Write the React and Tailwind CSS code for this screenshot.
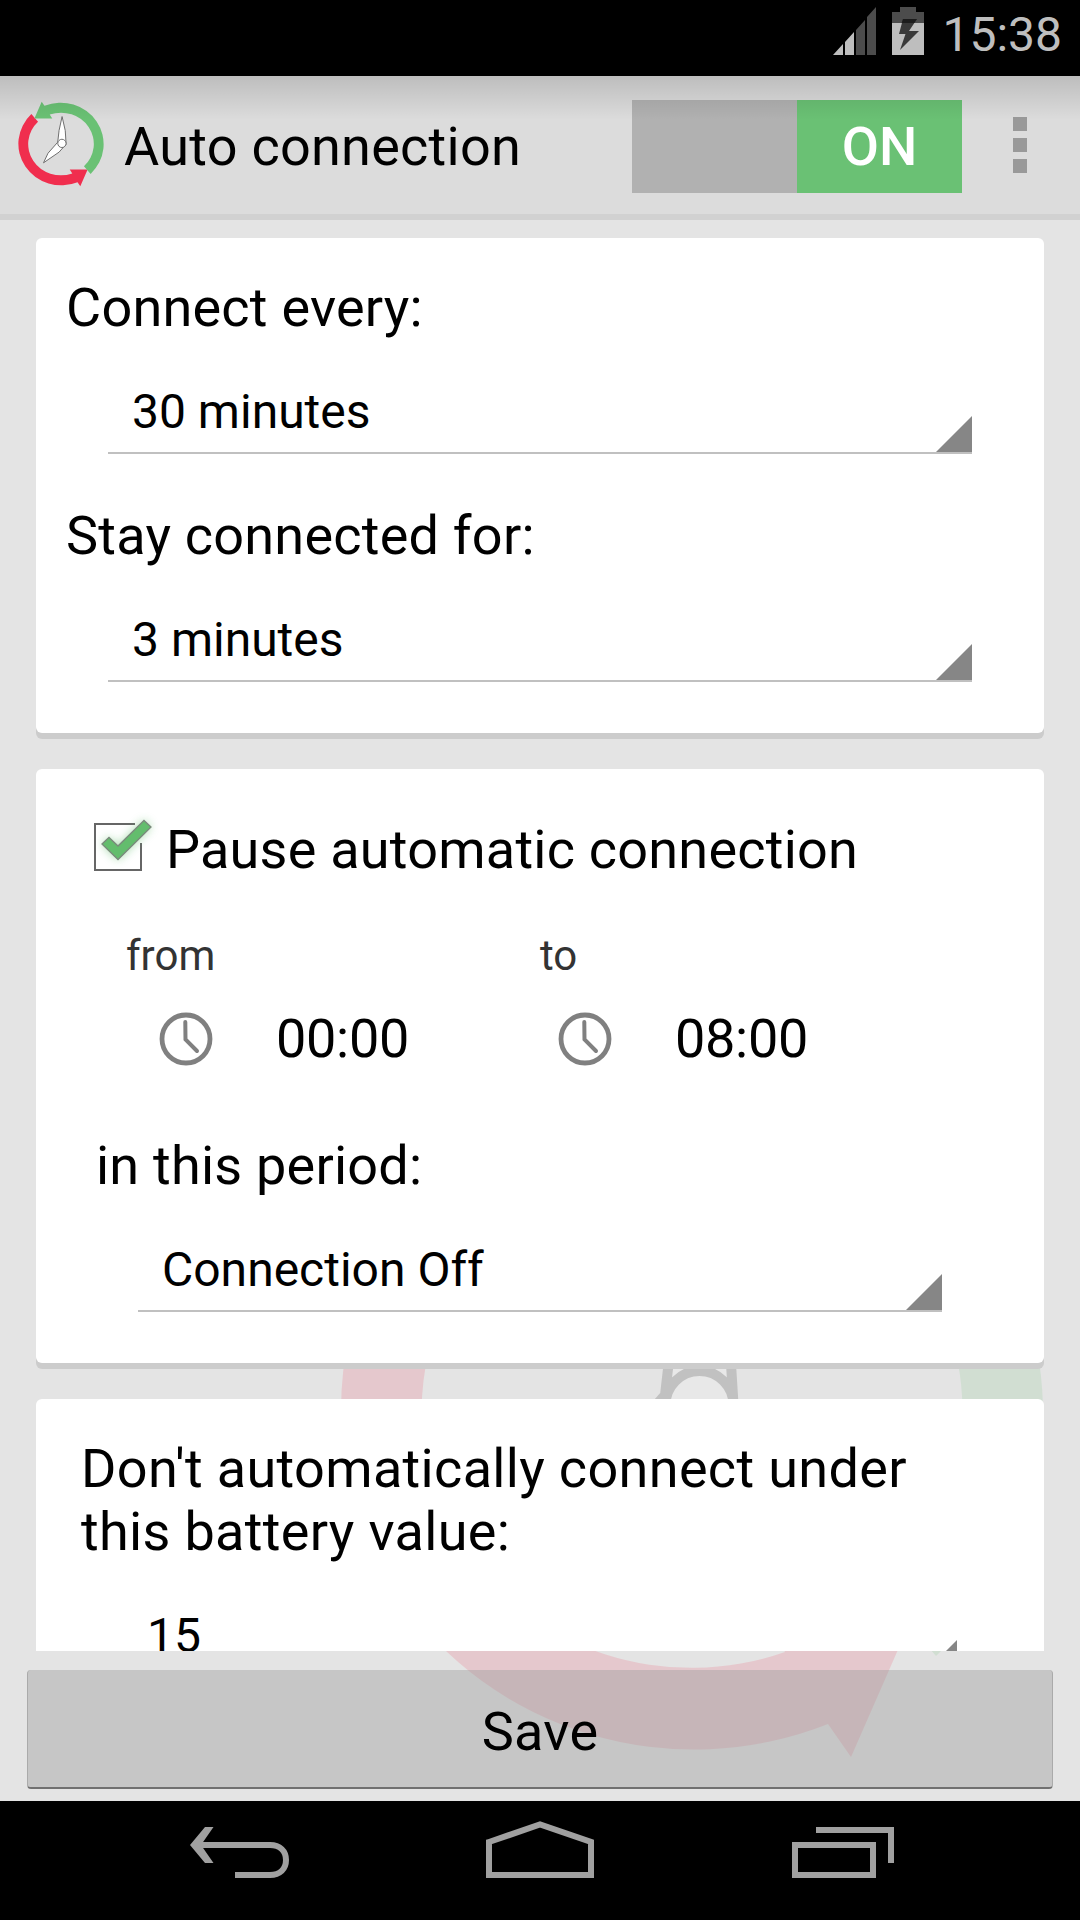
import { useState } from 'react';

const LogoShapes = ({ outline = '#000', outlineWidth = 10 }) => (
  <>
    {/* Both arrows are the same shape, turned by half a circle */}
    <path
      fill="#f02e4e"
      d="M448 1164A353 341 0 0 0 828 1724L851 1757L911 1620H764L785 1652A270 257 0 0 1 503 1227Z"
    />
    <path
      fill="#6ac174"
      transform="rotate(180 692 1410)"
      d="M448 1164A353 341 0 0 0 828 1724L851 1757L911 1620H764L785 1652A270 257 0 0 1 503 1227Z"
    />
    <g fill="#fff" stroke={outline} strokeWidth={outlineWidth} strokeLinejoin="round">
      <path d="M701 1184L676 1299L665 1395L585 1486L548 1565L676 1477L734 1412L727 1300Z" />
      <circle cx="699.5" cy="1405" r="34" />
    </g>
  </>
);

const Label = ({ children }) => (
  <div className="h-16 text-[54px] leading-16 tracking-[0.23px] whitespace-nowrap">{children}</div>
);

const Spinner = ({ value }) => (
  <div className="flex h-[70px] items-end justify-between border-b-2 border-[#c0c0c0] pl-6">
    <span className="h-[68px] text-[48px] leading-14 whitespace-nowrap">{value}</span>
    <svg className="size-9" viewBox="0 0 36 36">
      <path d="M36 0V36H0Z" fill="#868686" />
    </svg>
  </div>
);

const TimeButton = ({ value }) => (
  <button className="flex h-16 w-[399px] shrink-0 items-center">
    <svg className="mr-[62px] size-14" viewBox="0 0 56 56" fill="none" stroke="#808080">
      <circle cx="28" cy="28" r="24" strokeWidth="4.8" />
      <path d="M27.3 11L27.5 28.5L39 40" strokeWidth="4" strokeLinecap="round" />
    </svg>
    <span className="text-[54px] leading-16 tracking-[-0.3px]">{value}</span>
  </button>
);

const Card = ({ className, children }) => (
  <section className={`mx-9 shrink-0 rounded-md bg-white shadow-[0_6px_0_#cccccc] ${className}`}>
    {children}
  </section>
);

const StatusBar = () => (
  <div className="flex h-[76px] shrink-0 items-start justify-end bg-black pr-[18px]">
    <svg className="mt-[7px] mr-4 h-12 w-[43px]" viewBox="0 0 43 48">
      <path d="M0 48L10 37V48Z M12 35L21 25V48H12Z" fill="#bebebe" />
      <path d="M23 23L32 13V48H23Z M34 10L43 0V48H34Z" fill="#4c4c4c" />
    </svg>
    <svg className="mt-[7px] mr-[18px] h-12 w-8" viewBox="0 0 32 48">
      <path d="M8 0H24V5H32V16H0V5H8Z" fill="#4c4c4c" />
      <path d="M0 16H32V48H0Z" fill="#bebebe" />
      <path d="M11 12H25L17 24H27L8 43L13.500 27H7Z" fill="#393939" />
      <path d="M11 12H25L22.300 16H9.700Z" fill="#1c1c1c" />
    </svg>
    <span className="mt-[7px] text-[48px] leading-14 text-[#bebebe]">15:38</span>
  </div>
);

const ActionBar = ({ enabled, onToggle }) => (
  <header className="relative flex h-36 shrink-0 items-center border-b-6 border-[#d1d1d1] bg-[#dcdcdc]">
    <svg className="mb-0.5 ml-[18px] h-[86px] w-[86px] shrink-0" viewBox="338 1056 708 708">
      <LogoShapes outline="#6b6b6b" outlineWidth={8} />
    </svg>
    <h1 className="mt-1 ml-5 h-16 flex-1 text-[54px] leading-16 tracking-[0.27px] whitespace-nowrap">
      Auto connection
    </h1>
    <button
      className="mt-[3px] flex h-[93px] w-[330px] bg-[#b1b1b1]"
      onClick={onToggle}
    >
      <span
        className={`flex h-full w-[165px] items-center justify-center text-[54px] font-medium text-white ${
          enabled ? 'ml-[165px] bg-[#6ac174]' : 'bg-[#8a8a8a]'
        }`}
      >
        {enabled ? 'ON' : 'OFF'}
      </span>
    </button>
    <div className="mr-[53px] ml-[51px] flex flex-col gap-[7px]">
      <i className="size-3.5 bg-[#999]" />
      <i className="size-3.5 bg-[#999]" />
      <i className="size-3.5 bg-[#999]" />
    </div>
    {/* Shade under the status bar */}
    <div className="pointer-events-none absolute inset-x-0 top-0 h-11 bg-linear-to-b from-black/14 to-transparent" />
  </header>
);

const NavBar = () => (
  <nav className="flex h-[119px] shrink-0 bg-black px-[190px] pt-5">
    <svg
      className="h-[60px] w-full"
      viewBox="190 1821 700 60"
      fill="none"
      stroke="#a0a0a0"
      strokeWidth="6"
      overflow="visible"
    >
      <path d="M193 1845H270C280 1845 286 1851 286 1860S280 1875 270 1875H235" />
      <path d="M205 1827H213.500L201 1845L213.500 1863H205L190 1845Z" fill="#a0a0a0" stroke="none" />
      <path d="M489 1842L540 1824.500L591 1842V1875H489Z" />
      <path d="M795 1845H873V1875H795Z M816 1830H891V1863" />
    </svg>
  </nav>
);

const App = () => {
  const [enabled, setEnabled] = useState(true);
  const [paused, setPaused] = useState(true);

  return (
    <div className="flex h-[1920px] w-[1080px] flex-col overflow-hidden bg-[#e4e4e4] font-[Roboto,sans-serif] text-black">
      <StatusBar />
      <ActionBar enabled={enabled} onToggle={() => setEnabled(!enabled)} />

      <div className="relative flex h-[1581px] shrink-0 flex-col">
        {/* Faded logo behind the cards */}
        <svg
          className="absolute inset-0 h-full w-full opacity-15"
          viewBox="0 220 1080 1581"
        >
          <LogoShapes />
        </svg>

        <main className="relative flex h-[1431px] flex-col gap-9 overflow-hidden pt-[18px]">
          <Card className="h-[495px] pt-[38px] pr-[72px] pl-[30px]">
            <Label>Connect every:</Label>
            <div className="mt-11 mb-[50px] ml-[42px]">
              <Spinner value="30 minutes" />
            </div>
            <Label>Stay connected for:</Label>
            <div className="mt-11 ml-[42px]">
              <Spinner value="3 minutes" />
            </div>
          </Card>

          <Card className="h-[594px] pt-[49px] pr-[102px] pl-[60px]">
            <div
              className="flex h-16 cursor-pointer items-start"
              onClick={() => setPaused(!paused)}
            >
              <svg className="mt-[-7px] ml-[-8px] h-[72px] w-[78px] shrink-0" viewBox="0 0 78 72">
                <defs>
                  <filter id="glow" x="-50%" y="-50%" width="200%" height="200%">
                    <feGaussianBlur stdDeviation="5" />
                  </filter>
                </defs>
                <path d="M47 13H7V59H53V32" fill="none" stroke="#666" strokeWidth="2" />
                {paused && (
                  <>
                    <path
                      d="M14 33L21 26L30 35L56 9L63 16L30 49Z"
                      fill="#6ac174"
                      opacity="0.6"
                      filter="url(#glow)"
                    />
                    <path
                      d="M14 33L21 26.500L30 35L56 9.500L63 16L30 48.500Z"
                      fill="#63bd6d"
                      stroke="#7a8a7c"
                      strokeWidth="1.3"
                    />
                  </>
                )}
              </svg>
              <Label>Pause automatic connection</Label>
            </div>
            <div className="mt-[50px] ml-[30px] flex h-12 text-[42px] leading-12 text-[#333]">
              <span className="w-[414px]">from</span>
              <span>to</span>
            </div>
            <div className="mt-[27px] mb-[63px] ml-[62px] flex">
              <TimeButton value="00:00" />
              <TimeButton value="08:00" />
            </div>
            <Label>in this period:</Label>
            <div className="mt-11 ml-[42px]">
              <Spinner value="Connection Off" />
            </div>
          </Card>

          <Card className="h-[330px] pt-[38px] pr-[87px] pl-[45px]">
            <p className="text-[54px] leading-[63px] tracking-[0.33px] whitespace-nowrap">
              Don't automatically connect under
              <br />
              this battery value:
            </p>
            <div className="mt-[45px] ml-[42px]">
              <Spinner value="15" />
            </div>
          </Card>
        </main>

        <button className="relative mx-[27px] mt-[19px] h-[119px] rounded-[4px] border-x border-b-2 border-x-[#aaa] border-b-[#707070] bg-[#999]/40 pt-1.5 text-[54px] tracking-[0.3px]">
          Save
        </button>
      </div>

      <NavBar />
    </div>
  );
};

export default App;
